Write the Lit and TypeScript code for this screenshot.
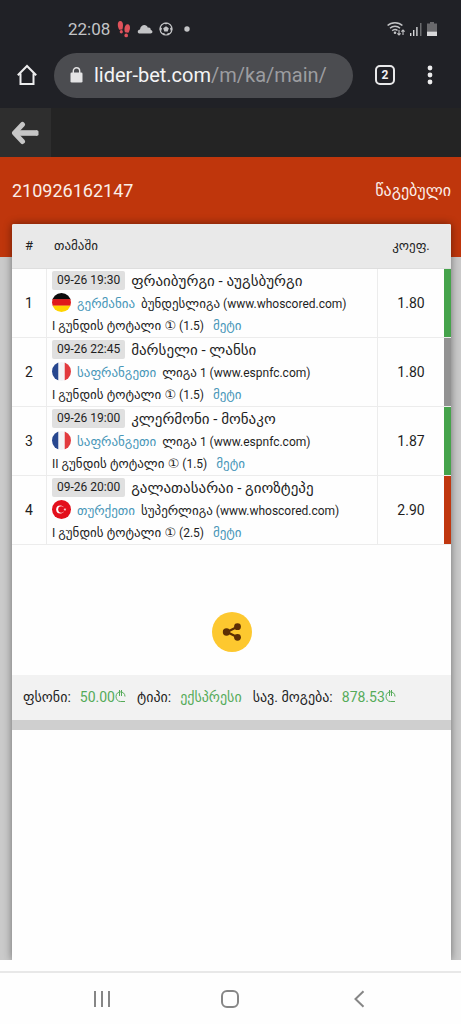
import { LitElement, html, css, svg } from "lit";
import { customElement, property } from "lit/decorators.js";

type Country = "de" | "fr" | "tr";
type Result = "won" | "void" | "lost";

interface Bet {
  date: string;
  teams: string;
  flag: Country;
  country: string;
  league: string;
  leagueNo: string;
  source: string;
  side: string;
  total: string;
  odds: string;
  result: Result;
}

const bets: Bet[] = [
  { date: "09-26 19:30", teams: "ფრაიბურგი - აუგსბურგი", flag: "de", country: "გერმანია", league: "ბუნდესლიგა", leagueNo: "", source: "(www.whoscored.com)", side: "I", total: "(1.5)", odds: "1.80", result: "won" },
  { date: "09-26 22:45", teams: "მარსელი - ლანსი", flag: "fr", country: "საფრანგეთი", league: "ლიგა", leagueNo: "1 ", source: "(www.espnfc.com)", side: "I", total: "(1.5)", odds: "1.80", result: "void" },
  { date: "09-26 19:00", teams: "კლერმონი - მონაკო", flag: "fr", country: "საფრანგეთი", league: "ლიგა", leagueNo: "1 ", source: "(www.espnfc.com)", side: "II", total: "(1.5)", odds: "1.87", result: "won" },
  { date: "09-26 20:00", teams: "გალათასარაი - გიოზტეპე", flag: "tr", country: "თურქეთი", league: "სუპერლიგა", leagueNo: "", source: "(www.whoscored.com)", side: "I", total: "(2.5)", odds: "2.90", result: "lost" },
];

const flagArt = {
  de: svg`<rect width="20" height="7" fill="#0c0c0c"/><rect y="6.5" width="20" height="7" fill="#e01a1a"/><rect y="13.3" width="20" height="7" fill="#ffd400"/>`,
  fr: svg`<rect width="20" height="20" fill="#f4f4f6"/><rect width="6.6" height="20" fill="#27478f"/><rect x="13.4" width="6.6" height="20" fill="#e23a3e"/>`,
  tr: svg`<rect width="20" height="20" fill="#e30f1c"/><circle cx="8.6" cy="10" r="4.2" fill="#fff"/><circle cx="9.8" cy="10" r="3.3" fill="#e30f1c"/><path d="M12 10l3-1-1.8 2.5v-3l1.8 2.5z" fill="#fff"/>`,
};

@customElement("status-bar")
class StatusBar extends LitElement {
  static styles = css`
    :host { display: block; }
    .bar { display: flex; align-items: center; height: 48px; padding: 10px 24px 0 68px; box-sizing: border-box; color: #c3c4c6; font: 17px/20px Roboto, sans-serif; }
    .left { display: flex; align-items: center; flex: 1; }
    .time { margin-right: 7px; }
    .left svg, .right svg { display: block; }
    .steps { margin-right: 6px; }
    .cloud { margin-right: 6px; }
    .ball { margin-right: 11px; }
    .right { display: flex; align-items: center; gap: 5px; }
  `;
  render() {
    return html`<div class="bar">
      <div class="left">
        <time class="time">22:08</time>
        <svg class="steps" width="14" height="18" viewBox="0 0 14 18" fill="#e0525b">
          <path d="M3.2 1C5 1 6.2 3 6 5.6 5.9 7.2 5.7 8.500 5.400 9.400L2.300 9.800C1.600 8.600.8 6.800.8 4.800.8 2.600 1.700 1 3.200 1z"/>
          <ellipse cx="4.300" cy="11.800" rx="1.600" ry="1.700"/>
          <path d="M10.600 4.200C12.400 4.300 13.200 6 13 8.200 12.800 10 12.200 11.600 11.300 12.800L8 12.300C7.500 11.200 7.300 9.800 7.500 8.300 7.800 5.800 9.100 4.100 10.600 4.200z"/>
          <ellipse cx="9.200" cy="15.400" rx="1.800" ry="1.900"/>
        </svg>
        <svg class="cloud" width="16" height="12" viewBox="0 0 16 12" fill="#c3c4c6"><path d="M3 10.500C-.2 10.500.2 6.700 3 6.500 3.500 1.300 9.600.5 10.900 4.700 13 4.300 13.800 5.500 13.800 7 16.200 7.500 15.800 10.500 13.500 10.500z"/></svg>
        <svg class="ball" width="14" height="14" viewBox="0 0 14 14"><circle cx="7" cy="7" r="6" fill="none" stroke="#c3c4c6" stroke-width="1.100"/><g fill="#c3c4c6"><path d="M7 4.200l2.800 2-1.100 3.200H5.300L4.200 6.200z"/><path d="M4.500.8L7 2.600 9.500.8zM13.200 4.500L11 6.200l.8 2.900 1.500-.8zM.8 4.500L3 6.200l-.8 2.900-1.500-.8zM2.800 11.500l2.500-.5.8 2.300zM11.200 11.500L8.700 11l-.8 2.300z"/></g></svg>
        <svg width="6" height="6" viewBox="0 0 6 6"><circle cx="3" cy="3" r="2.700" fill="#c3c4c6"/></svg>
      </div>
      <div class="right">
        <svg width="18" height="16" viewBox="0 0 18 16" fill="none" stroke="#c3c4c6" stroke-width="1.500"><path d="M.6 4.500C4.500.8 11.500.8 15.400 4.500M3 7.200C5.800 4.600 10.200 4.600 13 7.200M5.200 9.800C6.800 8.200 9.200 8.200 10.500 9.500"/><circle cx="8" cy="11.800" r="1.300" fill="#c3c4c6" stroke="none"/><path stroke-width="1.100" d="M12 9v5M10.400 12.300L12 14l1.600-1.700M16 14V9M14.400 10.700L16 9l1.600 1.700"/></svg>
        <svg width="12" height="14" viewBox="0 0 12 14"><path d="M0 11h1.400v3H0zM3 8h1.400v6H3zM6.200 5h1.400v9H6.200z" fill="#d4d5d7"/><path d="M10 1h1.500v13H10z" fill="#6b6c6f"/></svg>
        <svg width="10" height="14" viewBox="0 0 10 14"><path d="M3 0h4v1.500h3V9.500H0v-8h3z" fill="#69696c"/><path d="M0 9.500h10v4.500H0z" fill="#d8d8da"/></svg>
      </div>
    </div>`;
  }
}

@customElement("browser-bar")
class BrowserBar extends LitElement {
  static styles = css`
    :host { display: block; }
    .bar { display: flex; align-items: center; height: 60px; padding: 0 20px 6px 16px; box-sizing: border-box; }
    button { border: 0; padding: 0; background: none; display: grid; place-items: center; }
    .home { width: 22px; height: 44px; margin-right: 16px; }
    .address { flex: 1; min-width: 0; height: 45px; border-radius: 23px; background: #4b4c50; display: flex; align-items: center; padding: 0 16px; box-sizing: border-box; }
    .lock { flex: none; margin-right: 11px; }
    .url { font: 20px/24px Roboto, sans-serif; color: #9c9da0; text-decoration: none; white-space: nowrap; }
    .domain { color: #f4f4f5; }
    .tabs { width: 20px; height: 20px; box-sizing: border-box; border: 2px solid #e9e9ea; border-radius: 5px; color: #f1f1f2; font: 700 12px/16px Roboto, sans-serif; margin: 0 24px 0 22px; }
    .menu { width: 22px; height: 44px; }
  `;
  render() {
    return html`<div class="bar">
      <button class="home" aria-label="Home"><svg width="22" height="22" viewBox="0 0 22 22" fill="none" stroke="#ececed" stroke-width="2"><path d="M1.800 11.300L11 2l9.200 9.300M4.500 9.500V20h13V9.500"/></svg></button>
      <div class="address">
        <svg class="lock" width="13" height="16" viewBox="0 0 13 16"><rect x=".5" y="5.500" width="12" height="10" rx="1.300" fill="#e4e4e5"/><path d="M3.300 6V4a3.200 3.200 0 0 1 6.400 0v2" fill="none" stroke="#e4e4e5" stroke-width="1.400"/></svg>
        <a class="url" href="#"><span class="domain">lider-bet.com</span>/m/ka/main/</a>
      </div>
      <button class="tabs" aria-label="Tabs">2</button>
      <button class="menu" aria-label="Menu"><svg width="6" height="20" viewBox="0 0 6 20" fill="#ececed"><circle cx="3" cy="3" r="2.400"/><circle cx="3" cy="10" r="2.400"/><circle cx="3" cy="17" r="2.400"/></svg></button>
    </div>`;
  }
}

@customElement("bet-slip")
class BetSlip extends LitElement {
  @property({ attribute: false }) bets: Bet[] = [];

  static styles = css`
    :host { display: block; font: 14px/22px Roboto, "DejaVu Sans", sans-serif; color: #1e1e1e; }
    table { width: 100%; border-collapse: separate; border-spacing: 0; table-layout: fixed; }
    th { height: 44px; box-sizing: content-box; padding: 0; background: #e9e9e9; border-bottom: 1px solid #dedede; font-weight: 400; font-size: 13px; }
    .no { width: 34px; text-align: center; }
    .game { text-align: left; }
    th.game { padding-left: 8px; }
    .coef { width: 66px; text-align: center; }
    .mark { width: 7px; }
    td { padding: 0; border-bottom: 1px solid #ececec; }
    td.game { border-left: 1px solid #ececec; border-right: 1px solid #ececec; padding-left: 5px; white-space: nowrap; }
    td.mark { background-clip: padding-box; }
    .won { background-color: #45a34b; }
    .void { background-color: #929292; }
    .lost { background-color: #c0370f; }
    .line { display: flex; align-items: center; height: 23px; }
    .last { height: 22px; }
    .date { background: #e0e0e0; border-radius: 2px; font-size: 12px; line-height: 19px; padding: 0 5px; margin-right: 6px; }
    .teams { font-size: 15px; }
    .flag { border-radius: 50%; margin: 0 6px 2px 0; display: block; }
    .country, .more { color: #4896b8; font-size: 13px; text-decoration: none; }
    .country { margin-right: 6px; }
    .ka { font-size: 13px; }
    .detail { font-size: 12px; white-space: pre; }
    .more { margin-left: 9px; }
    .share-row { display: flex; justify-content: center; padding: 67px 0 23px; }
    .share { width: 40px; height: 40px; border: 0; border-radius: 50%; padding: 0; background: #fdc82f; display: grid; place-items: center; }
    .summary { display: flex; align-items: center; height: 43px; padding: 0 11px 2px; background: #f2f2f2; border-bottom: 10px solid #cfcfcf; margin: 0; white-space: nowrap; }
    .pair { display: flex; align-items: center; margin-right: 11px; }
    dt { margin-right: 9px; }
    dd { color: #55ab59; margin: 0; display: flex; align-items: center; }
  `;

  private lari() {
    return html`<svg width="11" height="14" viewBox="0 0 11 14" fill="none" stroke="#55ab59" stroke-width="1" role="img" aria-label="GEL"><path d="M10 6.500C10 .4 1 .4 1 6.500 1 9 2.600 11.500 5.300 11.500H10M4.500 0v6M6.500 0v6"/></svg>`;
  }

  render() {
    return html`
      <table>
        <thead><tr><th class="no">#</th><th class="game">თამაში</th><th class="coef">კოეფ.</th><th class="mark"></th></tr></thead>
        <tbody>
          ${this.bets.map((b, i) => html`<tr>
            <td class="no">${i + 1}</td>
            <td class="game">
              <div class="line"><span class="date">${b.date}</span><span class="teams">${b.teams}</span></div>
              <div class="line"><svg class="flag" width="19" height="19" viewBox="0 0 20 20">${flagArt[b.flag]}</svg><a class="country" href="#">${b.country}</a><span class="detail"><span class="ka">${b.league}</span> ${b.leagueNo}${b.source}</span></div>
              <div class="line last"><span class="detail">${b.side} <span class="ka">გუნდის ტოტალი ①</span> ${b.total}</span><a class="more" href="#">მეტი</a></div>
            </td>
            <td class="coef">${b.odds}</td>
            <td class="mark ${b.result}"></td>
          </tr>`)}
        </tbody>
      </table>
      <div class="share-row">
        <button class="share" aria-label="Share"><svg width="20" height="18" viewBox="0 0 20 18"><path d="M16 3.500L5 9l11 5.500" fill="none" stroke="#5d2f05" stroke-width="2.200"/><g fill="#5d2f05"><circle cx="4.500" cy="9" r="3.700"/><circle cx="15.500" cy="3.700" r="3.400"/><circle cx="15.500" cy="14.300" r="3.400"/></g></svg></button>
      </div>
      <dl class="summary">
        <div class="pair"><dt>ფსონი:</dt><dd><span>50.00</span>${this.lari()}</dd></div>
        <div class="pair"><dt>ტიპი:</dt><dd>ექსპრესი</dd></div>
        <div class="pair"><dt>სავ. მოგება:</dt><dd><span>878.53</span>${this.lari()}</dd></div>
      </dl>`;
  }
}

@customElement("app-root")
class AppRoot extends LitElement {
  static styles = css`
    :host { display: flex; flex-direction: column; min-height: 100vh; background: #fefefe; }
    .chrome { background: #202126; }
    .topbar { background: #242424; height: 49px; display: flex; }
    .back { width: 51px; border: 0; padding: 0; background: #2e2e2e; display: grid; place-items: center; }
    .page { flex: 1; display: flex; flex-direction: column; padding: 0 10px 0 12px; background: linear-gradient(#bf360c 100px, #cacaca 100px); }
    .title { display: flex; align-items: center; justify-content: space-between; height: 67px; color: #fbeee9; font: 18px/20px Roboto, sans-serif; }
    .status { font: 16px/20px "DejaVu Sans", sans-serif; }
    .card { flex: 1; background: #fefefe; box-shadow: 0 0 8px rgba(0, 0, 0, 0.45); border-radius: 2px 2px 0 0; clip-path: inset(-10px -10px 0 -10px); overflow: hidden; }
    .navbar { display: flex; justify-content: space-around; align-items: center; height: 51px; margin-top: 11px; padding: 0 38px; border-top: 2px solid #e8e8e8; }
    .nav { border: 0; background: none; padding: 0; width: 44px; height: 44px; display: grid; place-items: center; }
  `;
  render() {
    return html`
      <header class="chrome"><status-bar></status-bar><browser-bar></browser-bar></header>
      <div class="topbar"><button class="back" aria-label="Back"><svg width="29" height="24" viewBox="0 0 29 24" fill="none" stroke="#c6c6c6" stroke-width="5.500" stroke-linecap="round" stroke-linejoin="round"><path d="M11.500 3.500L3.500 12l8 8.500" stroke-width="5"/><path d="M5 12h21" stroke-linecap="butt" stroke-width="5.600"/><path d="M26 10.700v2.600" stroke-width="3"/></svg></button></div>
      <main class="page">
        <div class="title"><span>210926162147</span><span class="status">წაგებული</span></div>
        <div class="card"><bet-slip .bets=${bets}></bet-slip></div>
      </main>
      <nav class="navbar">
        <button class="nav" aria-label="Recent apps"><svg width="18" height="18" viewBox="0 0 18 18" fill="none" stroke="#868686" stroke-width="2"><path d="M2 1v16M9 1v16M16 1v16"/></svg></button>
        <button class="nav" aria-label="Home screen"><svg width="20" height="20" viewBox="0 0 20 20" fill="none" stroke="#868686" stroke-width="2"><rect x="2" y="2" width="16" height="16" rx="5"/></svg></button>
        <button class="nav" aria-label="Go back"><svg width="18" height="18" viewBox="0 0 18 18" fill="none" stroke="#868686" stroke-width="2"><path d="M13.500 1.300L5.500 9l8 7.700"/></svg></button>
      </nav>`;
  }
}
